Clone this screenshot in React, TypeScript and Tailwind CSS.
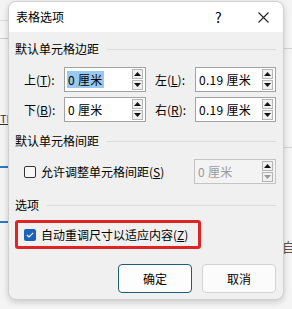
import type { ReactNode } from "react";

const font = { fontFamily: '"Noto Sans CJK SC", "Noto Sans", sans-serif' };

function Spinner({ disabled = false }: { disabled?: boolean }) {
  const arrow = disabled ? "#9a9a9a" : "#111";
  const up = "#111";
  return (
    <div className="mr-[2px] flex flex-col gap-[1px]">
      {[0, 1].map((i) => (
        <div
          key={i}
          className="flex h-[10px] w-[11px] items-center justify-center border border-[#b5b5b5] bg-[#f0f0f0]"
        >
          <svg width="7" height="4" viewBox="0 0 7 4">
            {i === 0 ? (
              <path d="M0 4 L3.5 0 L7 4 Z" fill={up} />
            ) : (
              <path d="M0 0 L3.5 4 L7 0 Z" fill={arrow} />
            )}
          </svg>
        </div>
      ))}
    </div>
  );
}

function SpinBox({
  value,
  width,
  selected = false,
  disabled = false,
}: {
  value: string;
  width: string;
  selected?: boolean;
  disabled?: boolean;
}) {
  return (
    <div
      className={`flex h-[25px] items-center justify-between border ${width} ${
        disabled ? "border-[#c4c4c4] bg-[#f3f3f3] text-[#9b9b9b]" : "border-[#a2a2a2] bg-white text-black"
      }`}
    >
      <span className={`ml-[2px] px-[1px] leading-[17px] tracking-[0.3px] ${selected ? "bg-[#99c9ef]" : ""}`}>
        {value}
      </span>
      <Spinner disabled={disabled} />
    </div>
  );
}

function SectionHeader({ children, mt }: { children: ReactNode; mt: string }) {
  return (
    <div className={`flex h-[16px] items-center ${mt}`}>
      <span className="leading-[16px]">{children}</span>
      <div className="ml-[8px] h-px flex-1 bg-[#dcdcdc]" />
    </div>
  );
}

function Label({ ch, k }: { ch: string; k: string }) {
  return (
    <span className="w-[40px] shrink-0">
      {ch}(<u>{k}</u>):
    </span>
  );
}

export default function App() {
  return (
    <div className="relative h-[309px] w-[292px] overflow-hidden bg-[#f4f4f4] text-[12px]" style={font}>
      {/* word page behind the dialog */}
      <div className="absolute left-0 top-[38px] h-px w-[8px] bg-[#c9c9c9]" />
      <div className="absolute left-0 top-[20px] h-px w-[8px] bg-[#dedede]" />
      <div className="absolute left-0 top-[112px] text-[11px] leading-[12px] text-[#333] underline">TL</div>
      <div className="absolute left-0 top-[166px] h-[2px] w-[8px] bg-[#2b79c2]" />
      <div className="absolute left-0 top-[221px] h-[2px] w-[8px] bg-[#2b79c2]" />
      <div className="absolute right-0 top-[48px] h-px w-[8px] bg-[#d2d2d2]" />
      <div className="absolute right-0 top-[147px] h-px w-[8px] bg-[#d2d2d2]" />
      <div className="absolute left-[282px] top-[240px] text-[13px] leading-[14px] text-[#555]">自</div>

      <div className="relative ml-[8px] mt-[1px] flex h-[299px] w-[276px] flex-col overflow-hidden rounded-[8px] border border-[#cfcfcf] bg-[#f0f0f0] shadow-[0_2px_6px_rgba(0,0,0,0.18)]">
        <div className="flex h-[30px] shrink-0 items-center bg-white pl-[7px]">
          <span className="text-[12px]">表格选项</span>
          <span className="ml-[151px] text-[14px] leading-none">?</span>
          <svg className="ml-[36px]" width="11" height="11" viewBox="0 0 11 11">
            <path d="M0.5 0.5 L10.5 10.5 M10.5 0.5 L0.5 10.5" stroke="#222" strokeWidth="1.1" />
          </svg>
        </div>

        <div className="flex flex-col pl-[6px] pr-[7px]">
          <SectionHeader mt="mt-[9px]">默认单元格边距</SectionHeader>

          <div className="mt-[10px] flex items-center pl-[9px]">
            <Label ch="上" k="T" />
            <SpinBox value="0 厘米" width="w-[83px]" selected />
            <span className="ml-[9px]" />
            <Label ch="左" k="L" />
            <SpinBox value="0.19 厘米" width="w-[82px]" />
          </div>
          <div className="mt-[5px] flex items-center pl-[9px]">
            <Label ch="下" k="B" />
            <SpinBox value="0 厘米" width="w-[83px]" />
            <span className="ml-[9px]" />
            <Label ch="右" k="R" />
            <SpinBox value="0.19 厘米" width="w-[82px]" />
          </div>

          <SectionHeader mt="mt-[11px]">默认单元格间距</SectionHeader>

          <div className="mt-[10px] flex items-center pl-[9px]">
            <div className="h-[12px] w-[12px] rounded-[2px] border border-[#333] bg-[#f7f7f7]" />
            <span className="ml-[5px] flex-1">
              允许调整单元格间距(<u>S</u>)
            </span>
            <SpinBox value="0 厘米" width="w-[82px]" disabled />
          </div>

          <SectionHeader mt="mt-[13px]">选项</SectionHeader>

          <div className="mt-[7px] flex h-[29px] w-[186px] items-center rounded-[3px] border-[3px] border-[#e02424] pl-[6px]">
            <div className="flex h-[12px] w-[12px] items-center justify-center rounded-[2px] bg-[#1a62b8]">
              <svg width="8" height="6" viewBox="0 0 8 6">
                <path d="M0.8 3 L3 5 L7.2 0.8" fill="none" stroke="white" strokeWidth="1.1" />
              </svg>
            </div>
            <span className="ml-[5px] text-[12px]">
              自动重调尺寸以适应内容(<u>Z</u>)
            </span>
          </div>

          <div className="mt-[15px] flex justify-end gap-[10px]">
            <button className="flex h-[29px] w-[74px] items-center justify-center rounded-[4px] border border-[#1f5b7d] bg-[#fdfdfd]">
              确定
            </button>
            <button className="flex h-[29px] w-[74px] items-center justify-center rounded-[4px] border border-[#d3d3d3] bg-[#fbfbfb]">
              取消
            </button>
          </div>
        </div>
      </div>
    </div>
  );
}
